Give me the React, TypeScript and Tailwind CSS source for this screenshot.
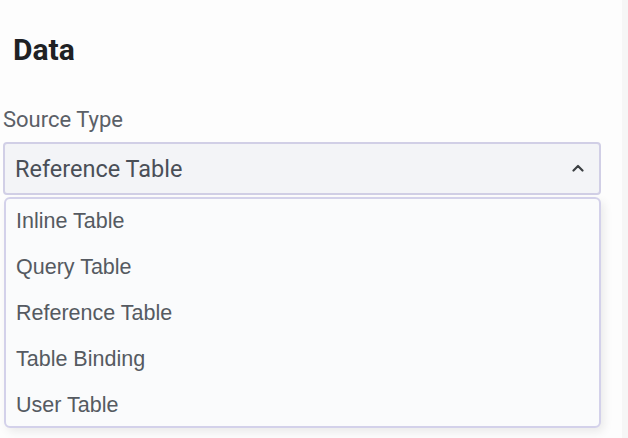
import React from "react";

const options = ["Inline Table", "Query Table", "Reference Table", "Table Binding", "User Table"];

export default function App() {
  return (
    <div className="w-[628px] h-[438px] bg-[#fdfdfd] flex overflow-hidden">
      <div className="w-[622px] flex flex-col pl-[3px] pr-[21px]" style={{ fontFamily: "Roboto, sans-serif" }}>
        <h2 className="mt-[32px] ml-[10px] text-[30px] leading-[36px] font-bold text-[#202124]">Data</h2>
        <div className="mt-[39px] text-[22px] leading-[26px] text-[#5b6067]">Source Type</div>
        <div className="mt-[9px] h-[53px] shrink-0 flex items-center justify-between rounded-[4px] border-2 border-[#d1cfe6] bg-[#f3f4f7] pl-[10px] pr-[15px]">
          <span className="text-[23.5px] leading-[28px] text-[#4a4f57]">Reference Table</span>
          <svg width="12" height="8" viewBox="0 0 12 8" className="mt-[-2px]">
            <path d="M1.5 6.5 L6 2 L10.5 6.5" fill="none" stroke="#3c4043" strokeWidth="2.2" strokeLinecap="round" strokeLinejoin="round" />
          </svg>
        </div>
        <div
          className="mt-[2px] ml-[1px] h-[231px] shrink-0 flex flex-col justify-center rounded-[6px] border-2 border-[#d3d1ea] bg-[#fafbfc] shadow-[3px_4px_10px_rgba(0,0,0,0.08)]"
          style={{ fontFamily: '"Liberation Sans", Arial, sans-serif' }}
        >
          {options.map((o) => (
            <div key={o} className="h-[46px] shrink-0 flex items-center pl-[10px] text-[21.5px] leading-[26px] text-[#555a61]">
              {o}
            </div>
          ))}
        </div>
      </div>
      <div className="flex-1 bg-[#f6f6f6]" />
    </div>
  );
}
